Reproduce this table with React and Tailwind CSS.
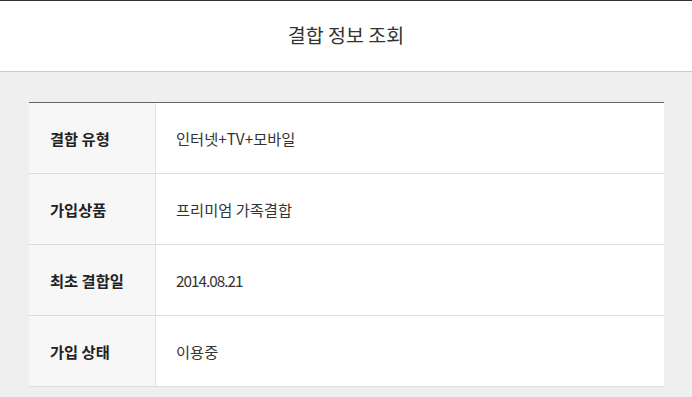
const rows = [
  { label: '결합 유형', value: '인터넷+TV+모바일' },
  { label: '가입상품', value: '프리미엄 가족결합' },
  { label: '최초 결합일', value: '2014.08.21', narrow: true },
  { label: '가입 상태', value: '이용중' },
];

export default function App() {
  return (
    <div className="min-h-[397px] bg-[#efefef] font-['Noto_Sans_CJK_KR','Noto_Sans',sans-serif] text-[#333]">
      <header className="h-[72px] border-t border-b border-t-[#333] border-b-[#cccccc] bg-white flex items-center justify-center">
        <h1 className="text-[19.5px] leading-none text-[#333] -mt-[2px]">결합 정보 조회</h1>
      </header>
      <div className="pt-[30px] pl-[29px] pr-[28px] pb-[10px]">
        <div className="border-t border-[#666] bg-white">
          {rows.map((row) => (
            <div key={row.label} className="flex h-[71px] border-b border-[#dddddd]">
              <div className="w-[127px] shrink-0 bg-[#f7f7f7] border-r border-[#e6e6e6] flex items-center pl-[21px] text-[15.3px] font-bold text-[#222]">
                {row.label}
              </div>
              <div className={`flex items-center pl-[20px] text-[15.3px] text-[#333] ${row.narrow ? 'tracking-[-1px]' : ''}`}>
                {row.value}
              </div>
            </div>
          ))}
        </div>
      </div>
    </div>
  );
}
